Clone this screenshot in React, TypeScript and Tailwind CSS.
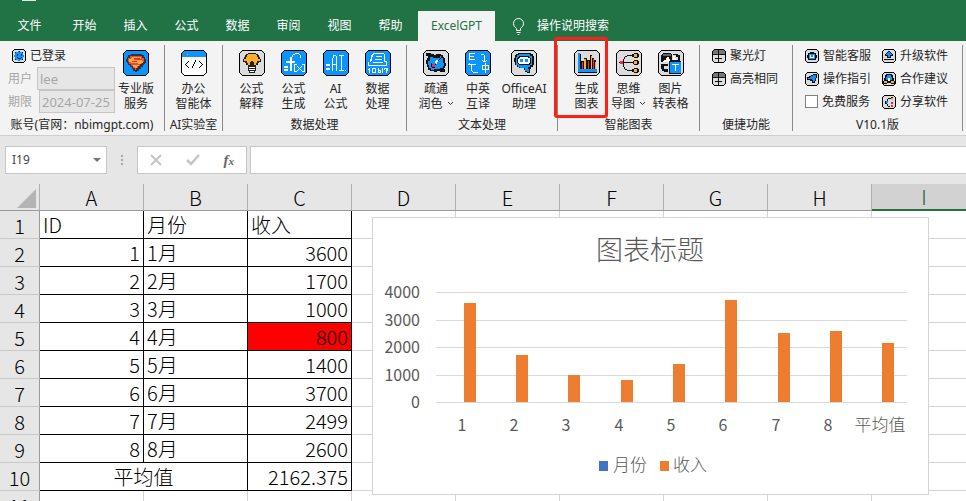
import React from "react";

interface IconFrameProps {
  size?: number;
  fill?: string;
  children: React.ReactNode;
}

const BLUE = "#0a95ff";

const IconFrame: React.FC<IconFrameProps> = ({
  size = 26,
  fill = "#dcdcdc",
  children,
}) => (
  <svg
    width={size}
    height={size}
    viewBox={`0 0 ${size} ${size}`}
    shapeRendering="crispEdges"
    fill="none"
    className="shrink-0"
    aria-hidden="true"
  >
    <path
      d={
        size === 26
          ? "M3 0h20v1h1v1h1v1h1v20h-1v1h-1v1h-1v1H3v-1H2v-1H1v-1H0V3h1V2h1V1h1z"
          : "M2 0h10v1h1v1h1v10h-1v1h-1v1H2v-1H1v-1H0V2h1V1h1z"
      }
      fill="#000"
    />
    <path
      d={
        size === 26
          ? "M3 1h20v1h1v1h1v20h-1v1h-1v1H3v-1H2v-1H1V3h1V2h1z"
          : "M2 1h10v1h1v10h-1v1H2v-1H1V2h1z"
      }
      fill={fill}
    />
    {children}
  </svg>
);

const SuperIcon = () => (
  <IconFrame fill={BLUE}>
    <path d="M8 4h11v1h2v2h1v2h1v4h-1v1h-1v1h-1v2h-2v2h-2v2h-2v1h-2v-1h-2v-2H9v-2H7v-2H5v-2H4v-1H3V9h1V7h1V5h3z" fill="#333" />
    <path d="M7 6h12v2h2v4h-2v2h-2v2h-2v2h-2v2h-1v-2h-2v-2H8v-2H6v-2H5V8h2z" fill="#f4433c" />
    <path d="M9 7h9v2h-7v1h8v1h1v2h-2v1h-3v-1H8v-1H6V9h2V8h1zM10 15h6v1h-2v2h-2v-1h-2z" fill="#fbb034" />
    <path d="M11 8h6v1h-6zM9 11h5v1H9zM15 9h3v1h-3z" fill="#d62b35" />
  </IconFrame>
);

const CodeIcon = () => (
  <IconFrame fill="#fff">
    <path d="M3 1h20v1h1v1h1v4H1V3h1V2h1z" fill={BLUE} />
    <path d="M4 4h1v1H4z" fill="#e43b30" />
    <path d="M6 4h1v1H6z" fill="#ffab2e" />
    <path d="M7 11h1v1H7zM6 12h1v1H6zM5 13h1v1H5zM4 14h1v1H4zM5 15h1v1H5zM6 16h1v1H6zM7 17h1v1H7zM14 10h1v2h-1zM13 12h1v2h-1zM12 14h1v2h-1zM11 16h1v2h-1zM18 11h1v1h-1zM19 12h1v1h-1zM20 13h1v1h-1zM21 14h1v1h-1zM20 15h1v1h-1zM19 16h1v1h-1zM18 17h1v1h-1z" fill="#000" />
  </IconFrame>
);

const BulbIcon = () => (
  <IconFrame>
    <path d="M9 3h8v1h2v1h1v2h1v2h1v3h-2v1h-1v2h-2v2h-8v-2H7v-2H6v-1H4V9h1V7h1V5h1V4h2z" fill="#222" />
    <path d="M9 4h8v1h1v2h1v2h2v2h-3v2h-1v2h-2v-3h-1v-1h-2v1h-1v3H9v-2H8v-2H5V9h2V7h1V5h1z" fill="#ffae2b" />
    <path d="M9 16h8v5h-1v2h-6v-2H9z" fill="#222" />
    <path d="M10 17h6v1h-6zM10 19h6v1h-6zM11 21h4v1h-4z" fill="#fff" />
  </IconFrame>
);

const FxIcon = () => (
  <IconFrame fill={BLUE}>
    <path d="M9 7h2v14H9zM5 11h9v2H5zM3 16h4v2H3zM3 19h4v2H3zM11 5h1v2h-1zM12 4h2v1h-2zM14 3h4v1h-4zM18 4h1v1h-1zM19 5h1v3h-1zM13 14h3v1h-2v6h2v1h-3zM21 14h3v8h-3v-1h2v-6h-2zM16 16h1v1h-1zM17 17h1v1h-1zM18 18h1v1h-1zM17 19h1v1h-1zM16 20h1v1h-1zM20 16h1v1h-1zM19 17h1v1h-1zM19 19h1v1h-1zM20 20h1v1h-1z" fill="#fff" />
  </IconFrame>
);

const AiIcon = () => (
  <IconFrame fill={BLUE}>
    <path d="M3 14h4v2H3zM3 18h4v2H3zM9 8h1v13H9zM10 5h3v1h-3zM10 6h1v2h-1zM13 6h1v15h-1zM10 14h3v1h-3zM16 5h5v1h-5zM18 6h1v15h-1zM16 20h5v1h-5zM22 20h1v1h-1z" fill="#fff" />
  </IconFrame>
);

const DataIcon = () => (
  <IconFrame fill={BLUE}>
    <path d="M8 3h11v1H9v1H8v2H7v4H6v1H4v3h18v1H3v-4h2V9h1V5h1V4h1zM19 4h1v7h2v5h-1v-4h-2zM11 6h6v1h-6zM10 9h7v1h-7zM8 12h10v1H8z" fill="#fff" />
    <path d="M4 18h1v5H4zM3 19h1v1H3zM7 18h4v5H7zM13 18h1v5h-1zM14 20h2v3h-2zM17 18h1v5h-1zM19 18h4v3h-1v2h-1v-3h-2z" fill="#fff" />
    <path d="M8 19h2v3H8zM14 21h1v1h-1zM20 19h1v1h-1z" fill={BLUE} />
  </IconFrame>
);

const PolishIcon = () => (
  <IconFrame>
    <path d="M3 3h5v1h3v1h2V4h5v1h2v2h1v1h1v5h1v3h-1v2h-1v1h1v3h-5v-1h-3v1h-3v-1H7v-1H5v-3H4v-3H3v-4h1V8h1V6H3z" fill="#111" />
    <path d="M7 7h3v1h7V6h1v2h2v5h1v3h-1v2h-3v1h-6v1H8v-2H6v-3H5v-4h2z" fill={BLUE} />
    <path d="M18 7h1v1h-1zM17 8h1v1h-1zM16 9h1v1h-1zM15 10h1v1h-1zM14 11h1v1h-1zM13 12h1v1h-1z" fill="#111" />
    <path d="M12 11h1v-1h2v2h-1v2h-1v-1h-1z" fill="#fff" />
    <path d="M9 14h3v3H9z" fill="#f02b4b" />
    <path d="M12 14h1v1h-1zM8 13h1v4H8zM9 17h3v1H9z" fill="#111" />
  </IconFrame>
);

const TranslateIcon = () => (
  <IconFrame fill={BLUE}>
    <path d="M4 3h6v1H5v2h4v1H5v2h5v1H4zM16 4h3v1h-3zM19 5h1v7h-1zM17 10h1v1h-1zM18 11h1v1h-1zM20 11h1v1h-1zM21 10h1v1h-1zM3 14h8v1H3zM6 15h1v6H6zM7 21h1v1H7zM8 22h5v1H8zM4 13h1v1H4zM17 15h7v5h-7z" fill="#fff" />
    <path d="M18 16h2v3h-2zM21 16h2v3h-2z" fill={BLUE} />
    <path d="M20 13h1v10h-1z" fill="#fff" />
  </IconFrame>
);

const ChatIcon = () => (
  <IconFrame>
    <path d="M7 3h13v1h2v2h1v9h-1v2h-2v2h-1v4h-3v-1h-2v-2h-1v-2H8v-1H6v-2H4v-3H3V8h1V5h1V4h2z" fill="#111" />
    <path d="M8 4h11v2h2v9h-2v2h-2v2h1v3h-2v-1h-2v-3H9v-1H7v-2H5V7h1V5h2z" fill={BLUE} />
    <path d="M8 6h10v1h1v1h1v6h-1v1H8v-1H7v-1H6V8h1V7h1z" fill="#111" />
    <path d="M9 7h8v1h2v5h-1v1H8v-1H7V9h1V8h1z" fill="#fff" />
    <path d="M9 9h3v3H9zM14 9h3v3h-3z" fill={BLUE} />
  </IconFrame>
);

const ChartIcon = () => (
  <IconFrame>
    <path d="M4 3h2v16h17v3H4z" fill={BLUE} />
    <path d="M6 4h1v15H6zM7 11h3v8H7zM10 8h3v11h-3zM13 10h3v9h-3zM16 5h2v14h-2zM18 8h2v11h-2zM20 10h2v9h-2zM4 22h19v1H4z" fill="#111" />
    <path d="M8 12h1v7H8zM14 11h1v8h-1zM19 9h1v10h-1z" fill="#f02b4b" />
    <path d="M10 9h2v10h-2zM17 6h1v13h-1zM21 12h1v7h-1z" fill="#ffae2b" />
  </IconFrame>
);

const MindIcon = () => (
  <IconFrame>
    <path d="M6 12h12v1H6zM11 5h6v1h-6zM9 6h2v1H9zM8 7h1v2H8zM7 9h1v8H7zM8 17h1v2H8zM9 19h2v1H9zM11 20h6v1h-6z" fill="#111" />
    <path d="M16 4h2V3h4v1h1v3h-1v1h-4V7h-2zM17 11h1v-1h4v1h1v3h-1v1h-4v-1h-1zM16 19h2v-1h4v1h1v3h-1v1h-4v-1h-2z" fill="#111" />
    <path d="M18 4h3v3h-3zM18 11h3v3h-3zM18 19h3v3h-3z" fill="#ffae2b" />
    <path d="M4 11h3v3H4z" fill="#f02b4b" />
    <path d="M3 12h1v1H3z" fill="#111" />
  </IconFrame>
);

const PictureIcon = () => (
  <IconFrame>
    <path d="M5 3h8v1h1v8H3V5h1V4h1zM15 4h5v1h2v6h-2V7h-2V5h-3zM3 14h7v2H6v3h4v3H6v-1H4v-2H3z" fill="#111" />
    <path d="M5 4h8v2H5z" fill="#666" />
    <path d="M5 11h1v-1h2V8h1V7h2v2h1v2h1v1H5zM15 6h2v2h1v2h-3z" fill="#fff" />
    <path d="M12 10h10v1h1v13H11V11h1z" fill="#111" />
    <path d="M12 12h11v11H12z" fill={BLUE} />
    <path d="M14 14h7v1h-3v6h-1v-6h-3z" fill="#fff" />
  </IconFrame>
);

const UserIcon = () => (
  <IconFrame size={14}>
    <path d="M4 3h2V2h2v1h2v1h1v2h1v2h-1v2h-1v1H8v1H6v-1H4v-1H3V8H2V6h1V4h1z" fill={BLUE} />
    <path d="M3 3h1v1H3zM7 2h1v1H7zM10 3h1v1h-1zM5 5h1v2H5zM9 5h1v2H9zM5 8h1v1H5zM6 9h3v1H6zM9 8h1v1H9zM3 10h1v1H3zM10 10h1v1h-1z" fill="#123" />
  </IconFrame>
);

const TableIcon = () => (
  <IconFrame size={14} fill="#dedede">
    <path d="M2 1h10v1h1v3H1V2h1z" fill="#777" />
    <path d="M6 1h1v12H6zM1 5h12v1H1zM3 9h7v1H3z" fill="#111" />
  </IconFrame>
);

const ServiceIcon = () => (
  <IconFrame size={14}>
    <path d="M5 3h4v1h2v2h1v3h-1v2H3V9H2V6h1V4h2z" fill="#111" />
    <path d="M4 5h6v5H4z" fill={BLUE} />
    <path d="M5 6h1v2h2V6h1v3H5z" fill="#fff" />
  </IconFrame>
);

const GuideIcon = () => (
  <IconFrame size={14}>
    <path d="M8 2h4v4h-1v3h-1v2H7V9H5V8H2V5h2V4h2V3h2z" fill="#111" />
    <path d="M8 3h3v3h-1v3H9v1H8V8H7V7H3V6h2V5h1V4h2z" fill={BLUE} />
  </IconFrame>
);

const UpgradeIcon = () => (
  <IconFrame size={14}>
    <path d="M6 2h2v1h1v1h1v1h1v2H9v2H5V7H3V5h1V4h1V3h1z" fill="#111" />
    <path d="M6 3h2v1h1v1h1v1H8v2H6V6H4V5h1V4h1z" fill={BLUE} />
    <path d="M2 10h10v1H2z" fill="#111" />
  </IconFrame>
);

const AdviceIcon = () => (
  <IconFrame size={14}>
    <path d="M4 2h6v1h1v3h1v3h1v3H9v-1H5v1H1V9h1V6h1V3h1z" fill="#111" />
    <path d="M5 3h4v2h1v3H4V5h1z" fill={BLUE} />
    <path d="M6 6h2v3H6z" fill="#fff" />
    <path d="M2 9h3v2H2zM9 9h3v2H9z" fill="#ffae2b" />
  </IconFrame>
);

const ShareIcon = () => (
  <IconFrame size={14}>
    <path d="M6 3h3v1H6zM5 4h1v2H5zM3 6h2v3H3zM5 9h1v2H5zM6 11h2v1H6zM9 2h2v1H9z" fill="#111" />
    <path d="M4 6h2v2H4z" fill={BLUE} />
    <path d="M9 3h2v2H9z" fill="#ffae2b" />
    <path d="M9 7h2v2H9zM9 10h2v2H9z" fill="#e8243f" />
  </IconFrame>
);

interface RibbonGroupProps {
  title: string;
  className: string;
  children: React.ReactNode;
}

const RibbonGroup: React.FC<RibbonGroupProps> = ({
  title,
  className,
  children,
}) => (
  <section
    className={`relative flex h-[86px] shrink-0 flex-col justify-between border-r border-[#8a8a8a] ${className}`}
  >
    {children}
    <h2 className="text-center leading-3 whitespace-nowrap">{title}</h2>
  </section>
);

interface BigButtonProps {
  icon: React.ReactNode;
  lines: [string, string];
  menu?: boolean;
  wide?: boolean;
}

const BigButton: React.FC<BigButtonProps> = ({ icon, lines, menu, wide }) => (
  <button
    type="button"
    className={`flex flex-col items-center pt-[5px] whitespace-nowrap ${wide ? "w-[50px]" : "w-[42px]"}`}
  >
    {icon}
    <span className="mt-[5px] leading-[15px]">{lines[0]}</span>
    <span className="flex items-center gap-1 leading-[15px]">
      {lines[1]}
      {menu && (
        <svg width="7" height="5" viewBox="0 0 7 5" aria-hidden="true">
          <path d="M1 1l2.5 2.5L6 1" fill="none" stroke="#333" />
        </svg>
      )}
    </span>
  </button>
);

const SmallButton: React.FC<{ icon: React.ReactNode; label: string }> = ({
  icon,
  label,
}) => (
  <button
    type="button"
    className="flex h-[23px] items-center gap-1 whitespace-nowrap"
  >
    {icon}
    {label}
  </button>
);

const tabs = ["开始", "插入", "公式", "数据", "审阅", "视图", "帮助"];

const Header = () => (
  <header className="bg-[#217346] text-white">
    <div className="h-[11px] pl-[22px]">
      <div className="h-px w-[14px] bg-[#dfe9e3]" />
    </div>
    <nav className="flex h-[30px] items-stretch whitespace-nowrap">
      <button type="button" className="w-[59px]">
        文件
      </button>
      {tabs.map((tab) => (
        <button type="button" key={tab} className="w-[51px]">
          {tab}
        </button>
      ))}
      <button
        type="button"
        className="ml-[2px] w-[77px] bg-[#f3f3f3] pb-px text-[#217346]"
      >
        ExcelGPT
      </button>
      <button type="button" className="ml-[17px] flex items-center gap-3">
        <svg width="13" height="17" viewBox="0 0 13 17" fill="none" stroke="#fff" aria-hidden="true">
          <path d="M4.500 12.500v-2C3 9 1.500 8 1.500 5.500a5 5 0 0 1 10 0c0 2.500-1.500 3.500-3 5v2zM4.500 14.500h4M5.500 16.500h2" />
        </svg>
        操作说明搜索
      </button>
    </nav>
  </header>
);

const Ribbon = () => (
  <div className="flex overflow-x-clip border-b border-[#d0d0d0] bg-[#f3f3f3] py-1 text-[#262626]">
    <RibbonGroup title="账号(官网：nbimgpt.com)" className="w-[165px]">
      <div className="flex pl-2">
        <div className="-mt-px w-[107px]">
          <div className="flex h-[23px] items-center gap-1 pl-1">
            <UserIcon />
            已登录
          </div>
          <label className="flex h-[23px] items-center justify-between text-[#a6a6a6]">
            用户
            <input
              disabled
              defaultValue="lee"
              className="h-[23px] w-[78px] border border-[#c6c6c6] bg-[#e6e6e6] px-[2px] text-[13px]"
            />
          </label>
          <label className="flex h-[23px] items-center justify-between text-[#a6a6a6]">
            期限
            <input
              disabled
              defaultValue="2024-07-25"
              className="h-[23px] w-[76px] border border-[#c6c6c6] bg-[#e6e6e6] px-[2px] text-[13px]"
            />
          </label>
        </div>
        <BigButton icon={<SuperIcon />} lines={["专业版", "服务"]} />
      </div>
    </RibbonGroup>
    <RibbonGroup title="AI实验室" className="w-[58px]">
      <div className="flex justify-center">
        <BigButton icon={<CodeIcon />} lines={["办公", "智能体"]} />
      </div>
    </RibbonGroup>
    <RibbonGroup title="数据处理" className="w-[184px]">
      <div className="flex justify-center">
        <BigButton icon={<BulbIcon />} lines={["公式", "解释"]} />
        <BigButton icon={<FxIcon />} lines={["公式", "生成"]} />
        <BigButton icon={<AiIcon />} lines={["AI", "公式"]} />
        <BigButton icon={<DataIcon />} lines={["数据", "处理"]} />
      </div>
    </RibbonGroup>
    <RibbonGroup title="文本处理" className="w-[151px]">
      <div className="flex justify-center">
        <BigButton icon={<PolishIcon />} lines={["疏通", "润色"]} menu />
        <BigButton icon={<TranslateIcon />} lines={["中英", "互译"]} />
        <BigButton icon={<ChatIcon />} lines={["OfficeAI", "助理"]} wide />
      </div>
    </RibbonGroup>
    <RibbonGroup title="智能图表" className="w-[142px]">
      <div className="flex justify-center">
        <BigButton icon={<ChartIcon />} lines={["生成", "图表"]} />
        <BigButton icon={<MindIcon />} lines={["思维", "导图"]} menu />
        <BigButton icon={<PictureIcon />} lines={["图片", "转表格"]} />
      </div>
      <div className="pointer-events-none absolute -top-2 -left-1 z-10 h-[81px] w-[54px] rounded-[3px] border-[3px] border-[#ff2015]" />
    </RibbonGroup>
    <RibbonGroup title="便捷功能" className="w-[93px]">
      <div className="-mt-px pl-3">
        <SmallButton icon={<TableIcon />} label="聚光灯" />
        <SmallButton icon={<TableIcon />} label="高亮相同" />
      </div>
    </RibbonGroup>
    <RibbonGroup title="V10.1版" className="w-[170px]">
      <div className="-mt-px grid grid-cols-[77px_1fr] pl-3">
        <SmallButton icon={<ServiceIcon />} label="智能客服" />
        <SmallButton icon={<UpgradeIcon />} label="升级软件" />
        <SmallButton icon={<GuideIcon />} label="操作指引" />
        <SmallButton icon={<AdviceIcon />} label="合作建议" />
        <label className="flex h-[23px] items-center gap-1 whitespace-nowrap">
          <input
            type="checkbox"
            className="size-[13px] appearance-none border border-[#808080] bg-white"
          />
          免费服务
        </label>
        <SmallButton icon={<ShareIcon />} label="分享软件" />
      </div>
    </RibbonGroup>
  </div>
);

const FormulaBar = () => (
  <div className="flex bg-[#e6e6e6] pt-[10px] pb-[10px] pl-[5px]">
    <div className="flex h-7 w-[102px] items-center border border-[#c6c6c6] bg-white pr-[5px]">
      <input
        aria-label="名称框"
        defaultValue="I19"
        className="min-w-0 flex-1 pl-[6px] text-[#444] outline-none"
      />
      <button type="button" aria-label="展开名称框">
        <svg width="8" height="4" viewBox="0 0 8 4" aria-hidden="true">
          <path d="M0 0h8L4 4z" fill="#777" />
        </svg>
      </button>
    </div>
    <div className="flex w-[30px] flex-col items-center justify-center gap-[2px]">
      <i className="size-[2px] bg-[#a6a6a6]" />
      <i className="size-[2px] bg-[#a6a6a6]" />
      <i className="size-[2px] bg-[#a6a6a6]" />
    </div>
    <div className="flex h-7 w-[110px] items-center justify-around border border-[#c6c6c6] bg-white">
      <button type="button" aria-label="取消">
        <svg width="12" height="12" viewBox="0 0 12 12" fill="none" stroke="#c4c4c4" strokeWidth="2" aria-hidden="true">
          <path d="M1 1l10 10M11 1L1 11" />
        </svg>
      </button>
      <button type="button" aria-label="输入">
        <svg width="14" height="12" viewBox="0 0 14 12" fill="none" stroke="#c4c4c4" strokeWidth="2.500" aria-hidden="true">
          <path d="M1 6l4 4 8-9" />
        </svg>
      </button>
      <button
        type="button"
        className="font-['Liberation_Serif',serif] text-[15px] leading-4 font-bold text-[#666] italic"
      >
        f<span className="text-[11px]">x</span>
      </button>
    </div>
    <input
      aria-label="编辑栏"
      className="ml-[3px] h-7 min-w-0 flex-1 border border-r-0 border-[#c6c6c6] bg-white px-1 outline-none"
    />
  </div>
);

const columns = ["A", "B", "C", "D", "E", "F", "G", "H", "I"];
const restColumns = columns.slice(3);
const incomes = [3600, 1700, 1000, 800, 1400, 3700, 2499, 2600];
const average = 2162.375;

const rowHead =
  "border-r border-b border-r-[#9b9b9b] border-b-[#c8c8c8] bg-[#e6e6e6] pt-[2px] text-center font-light";
const dataCell = "border-r border-b border-black px-[3px]";

const EmptyCells = () => (
  <>
    {restColumns.map((col) => (
      <td key={col} className="border-r border-b border-[#d4d4d4]" />
    ))}
  </>
);

const Sheet = () => (
  <table className="w-[976px] table-fixed border-separate border-spacing-0 text-xl leading-[25px] font-light text-black">
    <colgroup>
      <col className="w-10" />
      {columns.map((col) => (
        <col key={col} className="w-[104px]" />
      ))}
    </colgroup>
    <thead>
      <tr className="h-[27px] bg-[#e6e6e6]">
        <td className="border-r border-b border-r-[#b0b0b0] border-b-[#9b9b9b]">
          <svg width="19" height="19" viewBox="0 0 19 19" className="mt-[2px] ml-auto mr-[3px] block" aria-hidden="true">
            <path d="M19 0v19H0z" fill="#b4b4b4" />
          </svg>
        </td>
        {columns.map((col) => (
          <th
            key={col}
            scope="col"
            className={
              col === "I"
                ? "border-b-2 border-[#217346] bg-[#d2d2d2] text-center font-light text-[#215c3c]"
                : "border-r border-b border-r-[#b0b0b0] border-b-[#9b9b9b] pt-px text-center font-light"
            }
          >
            {col}
          </th>
        ))}
      </tr>
    </thead>
    <tbody>
      <tr className="h-7">
        <th scope="row" className={rowHead}>1</th>
        <td className={dataCell}>ID</td>
        <td className={dataCell}>月份</td>
        <td className={dataCell}>收入</td>
        <EmptyCells />
      </tr>
      {incomes.map((income, i) => (
        <tr key={i} className="h-7">
          <th scope="row" className={rowHead}>{i + 2}</th>
          <td className={`${dataCell} text-right`}>{i + 1}</td>
          <td className={dataCell}>{i + 1}月</td>
          <td
            className={`${dataCell} text-right ${income < 1000 ? "bg-[#ff0000]" : ""}`}
          >
            {income}
          </td>
          <EmptyCells />
        </tr>
      ))}
      <tr className="h-7">
        <th scope="row" className={rowHead}>10</th>
        <td colSpan={2} className={`${dataCell} text-center`}>平均值</td>
        <td className={`${dataCell} text-right`}>{average}</td>
        <EmptyCells />
      </tr>
      <tr className="h-7">
        <th scope="row" className={rowHead}>11</th>
        <td className="border-r border-b border-[#d4d4d4]" />
        <td className="border-r border-b border-[#d4d4d4]" />
        <td className="border-r border-b border-[#d4d4d4]" />
        <EmptyCells />
      </tr>
    </tbody>
  </table>
);

const chartData = [
  ...incomes.map((value, i) => ({ label: String(i + 1), value })),
  { label: "平均值", value: average },
];

const PLOT = { left: 63, width: 471, base: 184, height: 110, max: 4000 };

const IncomeChart = () => {
  const step = PLOT.width / chartData.length;
  const yOf = (value: number) =>
    Math.round(PLOT.base - (value / PLOT.max) * PLOT.height);

  return (
    <svg width="555" height="276" viewBox="0 0 555 276" fill="#595959" className="block">
      <text x="277" y="42" fontSize="27" fontWeight="300" textAnchor="middle">
        图表标题
      </text>
      {[4000, 3000, 2000, 1000, 0].map((tick) => (
        <g key={tick}>
          <rect x={PLOT.left} y={yOf(tick)} width={PLOT.width} height="1" fill="#d9d9d9" />
          <text x="47" y={yOf(tick) + 6} fontSize="16" textAnchor="end">
            {tick}
          </text>
        </g>
      ))}
      {chartData.map(({ label, value }, i) => (
        <g key={label}>
          <rect
            x={Math.floor(PLOT.left + 28 + i * step)}
            y={yOf(value)}
            width="12"
            height={PLOT.base - yOf(value)}
            fill="#ed7d31"
          />
          <text
            x={Math.floor(PLOT.left + (i + 0.5) * step)}
            y="213"
            fontSize={label.length > 1 ? 17 : 16}
            fontWeight={label.length > 1 ? 300 : 400}
            textAnchor="middle"
          >
            {label}
          </text>
        </g>
      ))}
      <rect x="226" y="243" width="9" height="10" fill="#4472c4" />
      <text x="240" y="253" fontSize="17" fontWeight="300">月份</text>
      <rect x="287" y="243" width="9" height="10" fill="#ed7d31" />
      <text x="300" y="253" fontSize="17" fontWeight="300">收入</text>
    </svg>
  );
};

const App: React.FC = () => {
  return (
    <div className="flex h-screen flex-col overflow-hidden bg-white font-['Noto_Sans','Noto_Sans_CJK_SC',sans-serif] text-xs">
      <Header />
      <Ribbon />
      <FormulaBar />
      <main className="relative min-h-0 flex-1 overflow-hidden font-['Noto_Sans_CJK_SC',sans-serif]">
        <Sheet />
        <div className="absolute top-[33px] left-[372px] border border-[#d4d4d4] bg-white">
          <IncomeChart />
        </div>
      </main>
    </div>
  );
};

export default App;
